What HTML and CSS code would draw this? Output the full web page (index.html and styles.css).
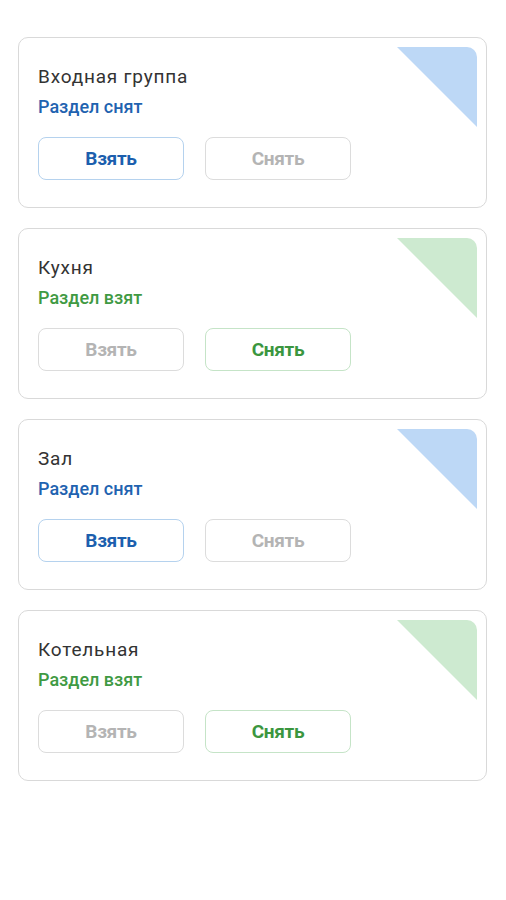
FILE: index.html
```html
<!DOCTYPE html>
<html lang="ru">
<head>
<meta charset="utf-8">
<title>Разделы</title>
<link rel="stylesheet" href="styles.css">
</head>
<body>
<main class="list">
  <section class="card card--off">
    <div class="corner"></div>
    <h2 class="title">Входная группа</h2>
    <p class="status">Раздел снят</p>
    <div class="actions">
      <button class="btn btn--active">Взять</button>
      <button class="btn btn--disabled">Снять</button>
    </div>
  </section>
  <section class="card card--on">
    <div class="corner"></div>
    <h2 class="title">Кухня</h2>
    <p class="status">Раздел взят</p>
    <div class="actions">
      <button class="btn btn--disabled">Взять</button>
      <button class="btn btn--active">Снять</button>
    </div>
  </section>
  <section class="card card--off">
    <div class="corner"></div>
    <h2 class="title">Зал</h2>
    <p class="status">Раздел снят</p>
    <div class="actions">
      <button class="btn btn--active">Взять</button>
      <button class="btn btn--disabled">Снять</button>
    </div>
  </section>
  <section class="card card--on">
    <div class="corner"></div>
    <h2 class="title">Котельная</h2>
    <p class="status">Раздел взят</p>
    <div class="actions">
      <button class="btn btn--disabled">Взять</button>
      <button class="btn btn--active">Снять</button>
    </div>
  </section>
</main>
</body>
</html>
```

FILE: styles.css
```css
html, body {
  margin: 0;
  padding: 0;
  background: #ffffff;
}

body {
  font-family: Roboto, "Noto Sans", "Liberation Sans", sans-serif;
  width: 506px;
}

.list {
  display: flex;
  flex-direction: column;
  gap: 20px;
  padding: 37px 19px 0 18px;
}

.card {
  position: relative;
  box-sizing: border-box;
  height: 171px;
  border: 1px solid #d9d9d9;
  border-radius: 10px;
  padding: 28px 19px 0 19px;
  background: #fff;
}

.corner {
  position: absolute;
  top: 9px;
  right: 9px;
  width: 80px;
  height: 80px;
  border-top-right-radius: 10px;
  clip-path: polygon(0 0, 100% 0, 100% 100%);
}

.card--off .corner { background: #bdd8f6; }
.card--on .corner { background: #cdead0; }

.title {
  margin: 0;
  font-size: 19px;
  line-height: 22px;
  font-weight: 400;
  letter-spacing: 0.8px;
  color: #333333;
}

.status {
  margin: 9px 0 0 0;
  font-size: 18px;
  line-height: 20px;
  font-weight: 500;
}

.card--off .status { color: #1f63b0; }
.card--on .status { color: #3f9a43; }

.actions {
  display: flex;
  gap: 21px;
  margin-top: 20px;
}

.btn {
  box-sizing: border-box;
  width: 146px;
  height: 43px;
  border-radius: 8px;
  background: #fff;
  font-family: Roboto, "Noto Sans", "Liberation Sans", sans-serif;
  font-size: 19px;
  font-weight: 700;
  letter-spacing: -0.3px;
  padding: 0;
  border: 1.5px solid #dcdcdc;
  color: #b4b4b4;
}

.card--off .btn--active {
  border-color: #b5d2ee;
  color: #1c5fae;
}

.card--on .btn--active {
  border-color: #c5e4c7;
  color: #3b963f;
}
```
